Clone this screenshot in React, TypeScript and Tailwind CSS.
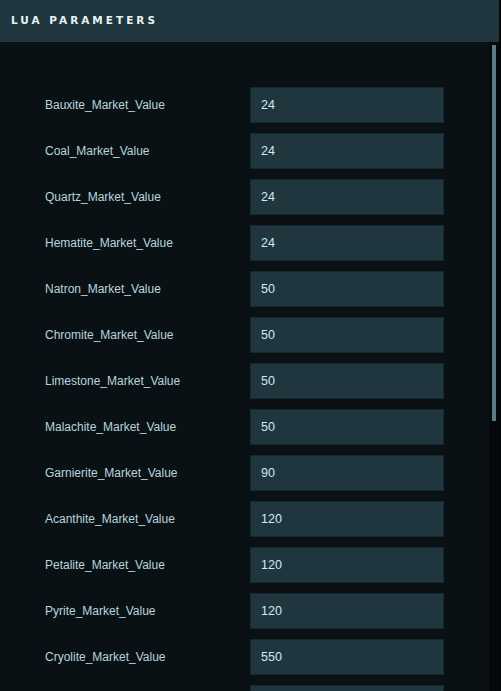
import React from 'react';

const params = [
  { name: 'Bauxite_Market_Value', value: '24' },
  { name: 'Coal_Market_Value', value: '24' },
  { name: 'Quartz_Market_Value', value: '24' },
  { name: 'Hematite_Market_Value', value: '24' },
  { name: 'Natron_Market_Value', value: '50' },
  { name: 'Chromite_Market_Value', value: '50' },
  { name: 'Limestone_Market_Value', value: '50' },
  { name: 'Malachite_Market_Value', value: '50' },
  { name: 'Garnierite_Market_Value', value: '90' },
  { name: 'Acanthite_Market_Value', value: '120' },
  { name: 'Petalite_Market_Value', value: '120' },
  { name: 'Pyrite_Market_Value', value: '120' },
  { name: 'Cryolite_Market_Value', value: '550' },
  { name: 'Kolbeckite_Market_Value', value: '550' },
];

export default function App() {
  return (
    <div className="flex h-[691px] w-[501px] overflow-hidden bg-[#03070a] font-['Liberation_Sans',sans-serif]">
      <div className="flex w-[499px] flex-col">
        <div className="flex h-[42px] shrink-0 items-center bg-[#1f363e] pl-[11px]">
          <h1 className="font-['DejaVu_Sans',sans-serif] text-[10.5px] font-bold uppercase tracking-[3px] text-[#e9f1f3]">Lua Parameters</h1>
        </div>
        <div className="flex min-h-0 flex-1">
          <div className="flex flex-1 flex-col gap-[10px] overflow-hidden bg-[#0a1115] pl-[45px] pt-[45px]">
            {params.map((p) => (
              <div key={p.name} className="flex h-[36px] shrink-0 items-center">
                <span className="w-[205px] text-[12px] text-[#b8d5de]">{p.name}</span>
                <div className="flex h-[36px] w-[194px] items-center border border-[#16292f] bg-[#1f363e] pl-[10px] text-[12.5px] text-[#d3e8ef]">
                  {p.value}
                </div>
              </div>
            ))}
          </div>
          <div className="w-[10px] bg-[#05090b] pl-[3px] pt-[3px]">
            <div className="h-[376px] w-[4px] bg-[#5b7c87]" />
          </div>
        </div>
      </div>
    </div>
  );
}
